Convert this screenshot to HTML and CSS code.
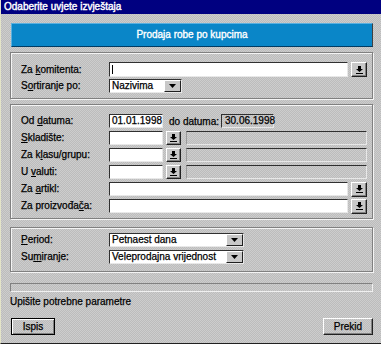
FILE: index.html
```html
<!DOCTYPE html>
<html>
<head>
<meta charset="utf-8">
<link rel="stylesheet" href="styles.css">
</head>
<body>
<div class="window">
  <div class="titlebar">Odaberite uvjete izvještaja</div>
  <div class="main">
    <div class="banner">Prodaja robe po kupcima</div>

    <div class="group g1">
      <div class="row r15">
        <span class="lbl">Za <u>k</u>omitenta:</span>
        <span class="field wide"><span class="caret"></span></span>
        <span class="sbtn"><svg width="7" height="8" viewBox="0 0 7 8"><rect x="2" y="0" width="3" height="3" fill="#000"/><path d="M0 3h7L3.5 6z" fill="#000"/><rect x="0" y="7" width="7" height="1" fill="#000"/></svg></span>
      </div>
      <div class="row">
        <span class="lbl">S<u>o</u>rtiranje po:</span>
        <span class="select s1"><span class="stext">Nazivima</span><span class="dbtn"><svg width="7" height="4" viewBox="0 0 7 4"><path d="M0 0h7L3.5 4z" fill="#000"/></svg></span></span>
      </div>
    </div>

    <div class="group g2">
      <div class="row">
        <span class="lbl">Od <u>d</u>atuma:</span>
        <span class="field short">01.01.1998</span>
        <span class="dolbl">do datuma:</span>
        <span class="ro date">30.06.1998</span>
      </div>
      <div class="row">
        <span class="lbl"><u>S</u>kladište:</span>
        <span class="field short"></span>
        <span class="sbtn small"><svg width="7" height="8" viewBox="0 0 7 8"><rect x="2" y="0" width="3" height="3" fill="#000"/><path d="M0 3h7L3.5 6z" fill="#000"/><rect x="0" y="7" width="7" height="1" fill="#000"/></svg></span>
        <span class="ro long"></span>
      </div>
      <div class="row">
        <span class="lbl">Za k<u>l</u>asu/grupu:</span>
        <span class="field short"></span>
        <span class="sbtn small"><svg width="7" height="8" viewBox="0 0 7 8"><rect x="2" y="0" width="3" height="3" fill="#000"/><path d="M0 3h7L3.5 6z" fill="#000"/><rect x="0" y="7" width="7" height="1" fill="#000"/></svg></span>
        <span class="ro long"></span>
      </div>
      <div class="row">
        <span class="lbl">U <u>v</u>aluti:</span>
        <span class="field short"></span>
        <span class="sbtn small"><svg width="7" height="8" viewBox="0 0 7 8"><rect x="2" y="0" width="3" height="3" fill="#000"/><path d="M0 3h7L3.5 6z" fill="#000"/><rect x="0" y="7" width="7" height="1" fill="#000"/></svg></span>
        <span class="ro long"></span>
      </div>
      <div class="row">
        <span class="lbl">Za <u>a</u>rtikl:</span>
        <span class="field wide"></span>
        <span class="sbtn"><svg width="7" height="8" viewBox="0 0 7 8"><rect x="2" y="0" width="3" height="3" fill="#000"/><path d="M0 3h7L3.5 6z" fill="#000"/><rect x="0" y="7" width="7" height="1" fill="#000"/></svg></span>
      </div>
      <div class="row">
        <span class="lbl">Za proizvođa<u>č</u>a:</span>
        <span class="field wide"></span>
        <span class="sbtn"><svg width="7" height="8" viewBox="0 0 7 8"><rect x="2" y="0" width="3" height="3" fill="#000"/><path d="M0 3h7L3.5 6z" fill="#000"/><rect x="0" y="7" width="7" height="1" fill="#000"/></svg></span>
      </div>
    </div>

    <div class="group g3">
      <div class="row">
        <span class="lbl"><u>P</u>eriod:</span>
        <span class="select s2"><span class="stext">Petnaest dana</span><span class="dbtn"><svg width="7" height="4" viewBox="0 0 7 4"><path d="M0 0h7L3.5 4z" fill="#000"/></svg></span></span>
      </div>
      <div class="row">
        <span class="lbl">Su<u>m</u>iranje:</span>
        <span class="select s2"><span class="stext">Veleprodajna vrijednost</span><span class="dbtn"><svg width="7" height="4" viewBox="0 0 7 4"><path d="M0 0h7L3.5 4z" fill="#000"/></svg></span></span>
      </div>
    </div>

    <div class="progress"></div>
    <div class="status">Upišite potrebne parametre</div>
    <div class="buttons">
      <span class="btn default">Ispis</span>
      <span class="btn prekid">Prekid</span>
    </div>
  </div>
</div>
</body>
</html>
```
FILE: styles.css
```css
html, body {
  margin: 0;
  padding: 0;
}
body {
  width: 381px;
  height: 344px;
  overflow: hidden;
  background: #c4c4c4;
  background-image: repeating-conic-gradient(#bcbcbc 0 25%, #cdcdcd 0 50%);
  background-size: 2px 2px;
  font-family: "Liberation Sans", Arial, sans-serif;
  font-size: 10px;
  color: #000;
  -webkit-text-stroke: 0.25px currentColor;
}
.window {
  height: 343px;
  border-bottom: 1px solid #202020;
  border-left: 1px solid #e4e4c8;
}
.titlebar {
  height: 14px;
  line-height: 14px;
  background: #000080;
  color: #fff;
  padding-left: 3px;
  font-size: 10px;
  -webkit-text-stroke: 0.4px #fff;
}
.main {
  padding: 0 8px 0 9px;
}
.banner {
  margin: 9px 0 0 1px;
  height: 22px;
  line-height: 22px;
  background: #0a86c8;
  color: #fff;
  text-align: center;
  font-size: 10px;
  -webkit-text-stroke: 0.35px #fff;
  border-top: 1px solid #5ab0e0;
  border-left: 1px solid #5ab0e0;
  border-bottom: 1px solid #003c64;
  border-right: 1px solid #404040;
}
.group {
  border: 1px solid #808080;
  box-shadow: 1px 1px 0 #f4f4f4, inset 1px 1px 0 #f4f4f4;
  display: flex;
  flex-direction: column;
}
.g1 {
  margin-top: 5px;
  padding: 9px 5px 5px 10px;
  gap: 2px;
}
.g2 {
  margin-top: 5px;
  padding: 9px 5px 5px 10px;
  gap: 3px;
}
.g3 {
  margin-top: 8px;
  padding: 5px 5px 7px 10px;
  gap: 3px;
}
.row {
  display: flex;
  align-items: center;
  height: 14px;
}
.row.r15 {
  height: 15px;
}
.lbl {
  width: 88px;
  flex: none;
  line-height: 14px;
  white-space: nowrap;
}
.field {
  box-sizing: border-box;
  height: 100%;
  background: #fff;
  border: 1px solid;
  border-color: #303030 #e8e8e8 #e8e8e8 #303030;
  padding-left: 2px;
  line-height: 12px;
  display: flex;
  align-items: center;
  white-space: nowrap;
}
.field.wide {
  flex: 1;
}
.field.short {
  width: 54px;
  flex: none;
}
.caret {
  width: 1px;
  height: 9px;
  background: #000;
}
.sbtn {
  box-sizing: border-box;
  width: 16px;
  height: 15px;
  margin-left: 3px;
  flex: none;
  border: 1px solid;
  border-color: #fff #202020 #202020 #fff;
  box-shadow: inset -1px -1px 0 #808080;
  display: flex;
  align-items: center;
  justify-content: center;
  background: #c8c8c8;
}
.sbtn.small {
  width: 15px;
  height: 14px;
}
.ro {
  box-sizing: border-box;
  height: 100%;
  border-top: 1px solid #303030;
  border-left: 1px solid #303030;
  border-bottom: 1px solid #e8e8e8;
  border-right: 1px solid #e8e8e8;
  padding-left: 3px;
  line-height: 12px;
  white-space: nowrap;
}
.ro.date {
  width: 53px;
  flex: none;
}
.ro.long {
  flex: 1;
  margin-left: 5px;
  border-left-color: #9a9a9a;
}
.dolbl {
  margin-left: 6px;
  width: 52px;
  flex: none;
  white-space: nowrap;
}
.select {
  box-sizing: border-box;
  height: 100%;
  display: flex;
  background: #fff;
  border: 1px solid;
  border-color: #303030 #e8e8e8 #e8e8e8 #303030;
}
.select.s1 {
  width: 73px;
}
.select.s2 {
  width: 135px;
}
.stext {
  flex: 1;
  padding-left: 2px;
  line-height: 12px;
  white-space: nowrap;
  overflow: hidden;
}
.dbtn {
  box-sizing: border-box;
  width: 17px;
  flex: none;
  background: #c8c8c8;
  border: 1px solid;
  border-color: #fff #202020 #202020 #fff;
  display: flex;
  align-items: center;
  justify-content: center;
}
.progress {
  box-sizing: border-box;
  margin-top: 11px;
  height: 9px;
  border: 1px solid #808080;
  border-bottom-color: #f0f0f0;
  border-right-color: #f0f0f0;
}
.status {
  margin-top: 3px;
  height: 14px;
  line-height: 14px;
}
.buttons {
  margin-top: 9px;
  display: flex;
  justify-content: space-between;
  padding-left: 1px;
}
.btn {
  box-sizing: border-box;
  height: 17px;
  line-height: 15px;
  text-align: center;
  border: 1px solid;
}
.btn.default {
  width: 44px;
  border-color: #000;
  box-shadow: inset 1px 1px 0 #fff, inset -1px -1px 0 #808080;
}
.btn.prekid {
  width: 50px;
  border-color: #fff #202020 #202020 #fff;
  box-shadow: inset -1px -1px 0 #808080;
}
```
